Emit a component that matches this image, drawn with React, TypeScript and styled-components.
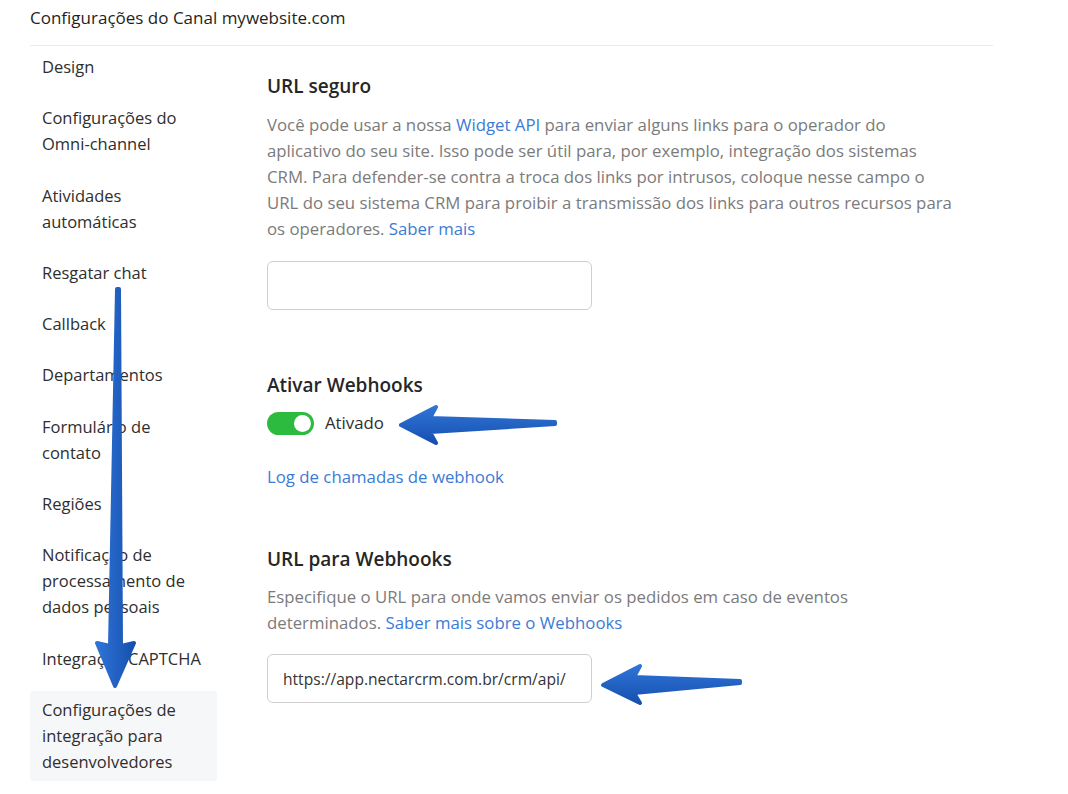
import React from "react";
import styled, { createGlobalStyle } from "styled-components";

const Global = createGlobalStyle`
  html, body { margin: 0; padding: 0; background: #fff; }
  body { font-family: "Open Sans", "Noto Sans", sans-serif; color: #2a2a2a; }
  * { box-sizing: border-box; }
`;

const Page = styled.div`
  position: relative;
  width: 1068px;
  min-height: 794px;
  padding-left: 30px;
`;

const Header = styled.header`
  width: 963px;
  height: 46px;
  padding-top: 5px;
  border-bottom: 1px solid #ebebeb;
  font-size: 17px;
  line-height: 26px;
  color: #1f1f1f;
  font-weight: 500;
`;

const Main = styled.div`
  display: flex;
  gap: 50px;
`;

const Sidebar = styled.nav`
  width: 187px;
  flex: none;
  padding-top: 2px;
  display: flex;
  flex-direction: column;
  gap: 13.3px;
`;

const NavItem = styled.div<{ $active?: boolean }>`
  padding: 6px 12px;
  font-size: 16.5px;
  line-height: 26px;
  color: #2e2e2e;
  background: ${(p) => (p.$active ? "#f6f7f9" : "transparent")};
  border-radius: 3px;
`;

const Content = styled.section`
  width: 700px;
  padding-top: 27px;
  display: flex;
  flex-direction: column;
`;

const Title = styled.h2<{ $mt?: number }>`
  margin: ${(p) => p.$mt ?? 0}px 0 0;
  font-size: 19px;
  line-height: 26px;
  font-weight: 600;
  color: #262626;
`;

const Text = styled.p<{ $mt?: number; $width?: number }>`
  margin: ${(p) => p.$mt ?? 0}px 0 0;
  max-width: ${(p) => p.$width ?? 688}px;
  font-size: 16.8px;
  line-height: 26px;
  color: #7b7b7b;
`;

const Link = styled.a`
  color: #3b7bd6;
  text-decoration: none;
`;

const BlockLink = styled(Link)<{ $mt?: number }>`
  display: block;
  margin-top: ${(p) => p.$mt ?? 0}px;
  font-size: 16.8px;
  line-height: 26px;
`;

const Input = styled.input<{ $mt?: number }>`
  margin-top: ${(p) => p.$mt ?? 0}px;
  width: 325px;
  height: 49px;
  border: 1px solid #cfcfcf;
  border-radius: 6px;
  padding: 0 10px 0 15px;
  font-family: inherit;
  font-size: 15.6px;
  color: #333;
  outline: none;
  background: #fff;
`;

const ToggleRow = styled.div<{ $mt?: number }>`
  margin-top: ${(p) => p.$mt ?? 0}px;
  display: flex;
  align-items: center;
  gap: 11px;
  font-size: 16.8px;
  line-height: 26px;
  color: #2e2e2e;
`;

const Switch = styled.span`
  position: relative;
  width: 47px;
  height: 23px;
  border-radius: 12px;
  background: #2dbb3f;
  &::after {
    content: "";
    position: absolute;
    right: 3px;
    top: 3px;
    width: 17px;
    height: 17px;
    border-radius: 50%;
    background: #fff;
  }
`;

const Overlay = styled.svg`
  position: absolute;
  left: 0;
  top: 0;
  width: 1068px;
  height: 794px;
  pointer-events: none;
`;

const navItems: { label: string; active?: boolean }[] = [
  { label: "Design" },
  { label: "Configurações do Omni-channel" },
  { label: "Atividades automáticas" },
  { label: "Resgatar chat" },
  { label: "Callback" },
  { label: "Departamentos" },
  { label: "Formulário de contato" },
  { label: "Regiões" },
  { label: "Notificação de processamento de dados pessoais" },
  { label: "Integração CAPTCHA" },
  { label: "Configurações de integração para desenvolvedores", active: true },
];

export default function App() {
  return (
    <>
      <Global />
      <Page>
        <Header>Configurações do Canal mywebsite.com</Header>
        <Main>
          <Sidebar>
            {navItems.map((n) => (
              <NavItem key={n.label} $active={n.active}>
                {n.label}
              </NavItem>
            ))}
          </Sidebar>
          <Content>
            <Title>URL seguro</Title>
            <Text $mt={13}>
              Você pode usar a nossa <Link>Widget API</Link> para enviar alguns links para o operador do
              aplicativo do seu site. Isso pode ser útil para, por exemplo, integração dos sistemas CRM.
              Para defender-se contra a troca dos links por intrusos, coloque nesse campo o URL do seu
              sistema CRM para proibir a transmissão dos links para outros recursos para os operadores.{" "}
              <Link>Saber mais</Link>
            </Text>
            <Input $mt={19} defaultValue="" />
            <Title $mt={62}>Ativar Webhooks</Title>
            <ToggleRow $mt={12}>
              <Switch />
              Ativado
            </ToggleRow>
            <BlockLink $mt={28}>Log de chamadas de webhook</BlockLink>
            <Title $mt={56}>URL para Webhooks</Title>
            <Text $mt={12} $width={600}>
              Especifique o URL para onde vamos enviar os pedidos em caso de eventos determinados.{" "}
              <Link>Saber mais sobre o Webhooks</Link>
            </Text>
            <Input $mt={18} defaultValue="https://app.nectarcrm.com.br/crm/api/" />
          </Content>
        </Main>
        <Overlay viewBox="0 0 1068 794">
          <defs>
            <linearGradient id="ag" x1="0" y1="0" x2="0" y2="1">
              <stop offset="0" stopColor="#2f74d6" />
              <stop offset="1" stopColor="#1650b0" />
            </linearGradient>
            <linearGradient id="agv" x1="0" y1="0" x2="1" y2="0">
              <stop offset="0" stopColor="#2f74d6" />
              <stop offset="1" stopColor="#1650b0" />
            </linearGradient>
          </defs>
          <path
            d="M117 289 L119 289 L121 646 L134 643 L115 686 L97 643 L110 646 Z"
            fill="url(#agv)"
            stroke="url(#agv)"
            strokeWidth={4}
            strokeLinejoin="round"
          />
          <path
            d="M401 425 L436 407 L430 418 L555 422 L555 424 L430 432 L436 443 Z"
            fill="url(#ag)"
            stroke="url(#ag)"
            strokeWidth={4}
            strokeLinejoin="round"
          />
          <path
            d="M603 685 L640 666 L634 677 L740 681 L740 683 L634 693 L640 703 Z"
            fill="url(#ag)"
            stroke="url(#ag)"
            strokeWidth={4}
            strokeLinejoin="round"
          />
        </Overlay>
      </Page>
    </>
  );
}
